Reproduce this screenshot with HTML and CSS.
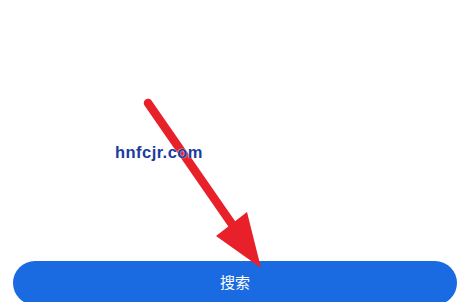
FILE: index.html
```html
<!DOCTYPE html>
<html lang="zh">
<head>
<meta charset="utf-8">
<link rel="stylesheet" href="styles.css">
</head>
<body>
<div class="page">
  <button class="search-btn">搜索</button>
  <svg class="arrow" width="471" height="302" viewBox="0 0 471 302">
    <line x1="148" y1="103" x2="236" y2="230" stroke="#e8202a" stroke-width="8.5" stroke-linecap="round"/>
    <polygon points="216,236 247,212 261,268" fill="#e8202a"/>
  </svg>
  <div class="watermark">hnfcjr.com</div>
</div>
</body>
</html>
```
FILE: styles.css
```css
html, body {
  margin: 0;
  padding: 0;
  background: #ffffff;
}
.page {
  position: relative;
  width: 471px;
  height: 302px;
  box-sizing: border-box;
  padding: 261px 14px 0 13px;
  overflow: hidden;
}
.search-btn {
  display: flex;
  align-items: center;
  justify-content: center;
  width: 100%;
  height: 44px;
  padding: 0 0 3px 0;
  border: none;
  border-radius: 22px;
  background: #1a6be1;
  color: #ffffff;
  font-family: "Noto Sans CJK SC", "Noto Sans", sans-serif;
  font-size: 15px;
}
.arrow {
  position: absolute;
  left: 0;
  top: 0;
}
.watermark {
  position: absolute;
  left: 115px;
  top: 144px;
  font-family: "Liberation Sans", Arial, sans-serif;
  font-weight: bold;
  font-size: 16.5px;
  line-height: 1;
  letter-spacing: 0.45px;
  color: #1b3b9e;
  text-shadow: 0 0 1px #ffffff, 0 0 1px #ffffff;
}
```
